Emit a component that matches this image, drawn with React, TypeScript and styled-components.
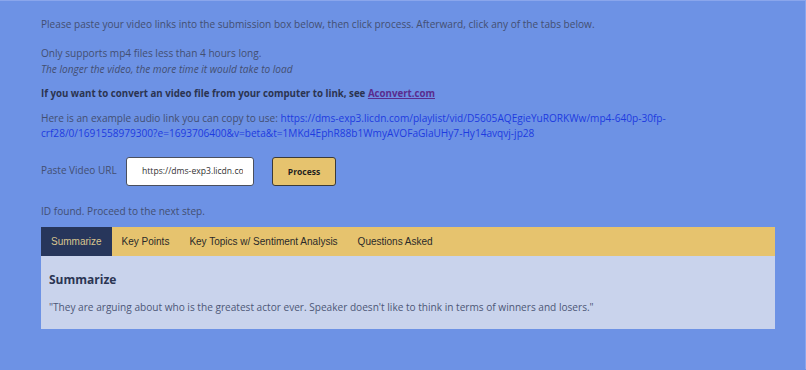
import { useState } from 'react';
import styled, { createGlobalStyle } from 'styled-components';

const GlobalStyle = createGlobalStyle`
  html, body {
    margin: 0;
    padding: 0;
    background-color: #6d92e5;
  }
  body {
    font-family: "Open Sans", "Liberation Sans", sans-serif;
    color: #434f72;
    border-top: 1px solid #8aa6ec;
    border-right: 1px solid #8aa6ec;
    min-height: 369px;
    box-sizing: border-box;
  }
`;

const tabs = ['Summarize', 'Key Points', 'Key Topics w/ Sentiment Analysis', 'Questions Asked'];

const exampleLink =
  'https://dms-exp3.licdn.com/playlist/vid/D5605AQEgieYuRORKWw/mp4-640p-30fp-crf28/0/1691558979300?e=1693706400&v=beta&t=1MKd4EphR88b1WmyAVOFaGlaUHy7-Hy14avqvj-jp28';

function App() {
  const [active, setActive] = useState(0);
  const [url, setUrl] = useState('https://dms-exp3.licdn.com/playlist/vid/D5605AQEgieYuRORKWw');

  return (
    <>
      <GlobalStyle />
      <Page>
        <Para>
          Please paste your video links into the submission box below, then click process. Afterward, click any of
          the tabs below.
        </Para>

        <Para gap={8.5}>
          Only supports mp4 files less than 4 hours long.
          <br />
          <em>The longer the video, the more time it would take to load</em>
        </Para>

        <BoldPara gap={9.5}>
          If you want to convert an video file from your computer to link, see{' '}
          <Visited href="#">Aconvert.com</Visited>
        </BoldPara>

        <Para>
          Here is an example audio link you can copy to use: <Link href="#">{exampleLink}</Link>
        </Para>

        <UrlRow>
          <Label>Paste Video URL</Label>
          <UrlInput value={url} onChange={(e) => setUrl(e.target.value)} />
          <ProcessButton>Process</ProcessButton>
        </UrlRow>

        <Status>ID found. Proceed to the next step.</Status>

        <TabBox>
          <TabBar>
            {tabs.map((t, i) => (
              <Tab key={t} active={i === active} onClick={() => setActive(i)}>
                {t}
              </Tab>
            ))}
          </TabBar>
          <Panel>
            <PanelTitle>{tabs[active]}</PanelTitle>
            <Quote>
              "They are arguing about who is the greatest actor ever. Speaker doesn't like to think in terms of winners
              and losers."
            </Quote>
          </Panel>
        </TabBox>
      </Page>
    </>
  );
}

export default App;

const Page = styled.div`
  width: 734px;
  padding: 16px 0 0 41px;
  font-size: 10.1px;
  line-height: 15.5px;
`;

const Para = styled.p<{ gap?: number }>`
  margin: 0 0 ${({ gap }) => gap ?? 13.5}px;
  em {
    font-style: italic;
  }
`;

const BoldPara = styled(Para)`
  font-weight: 700;
  font-size: 9.7px;
  color: #2b3450;
`;

const Visited = styled.a`
  color: #5a2c8e;
  text-decoration: underline;
`;

const Link = styled.a`
  color: #1d3be0;
  text-decoration: none;
`;

const UrlRow = styled.div`
  display: flex;
  align-items: center;
  margin-top: 15px;
`;

const Label = styled.span`
  flex: 0 0 85px;
  white-space: nowrap;
  font-size: 10px;
`;

const UrlInput = styled.input`
  box-sizing: border-box;
  flex-shrink: 0;
  width: 128px;
  height: 29px;
  padding: 0 10px 0 15px;
  border: 1px solid #4a4f5e;
  border-radius: 3px;
  background: #ffffff;
  font-family: "Open Sans", "Liberation Sans", sans-serif;
  font-size: 8.6px;
  color: #333;
  outline: none;
`;

const ProcessButton = styled.button`
  box-sizing: border-box;
  flex-shrink: 0;
  margin-left: 18px;
  width: 64px;
  height: 29px;
  border: 1px solid #3b3a38;
  border-radius: 3px;
  background: #e6c36e;
  font-family: "Open Sans", "Liberation Sans", sans-serif;
  font-weight: 700;
  font-size: 8.5px;
  color: #1f1f1f;
  cursor: pointer;
`;

const Status = styled.p`
  margin: 18px 0 8px;
`;

const TabBox = styled.div`
  width: 734px;
`;

const TabBar = styled.div`
  display: flex;
  height: 29px;
  background: #e6c36e;
`;

const Tab = styled.button<{ active: boolean }>`
  border: none;
  padding: 0 10px;
  font-family: "Liberation Sans", Arial, sans-serif;
  font-size: 10px;
  cursor: pointer;
  background: ${({ active }) => (active ? '#27365b' : 'transparent')};
  color: ${({ active }) => (active ? '#d8c58e' : '#2a2a2a')};
`;

const Panel = styled.div`
  background: #c9d3ec;
  padding: 16px 8px 13px;
`;

const PanelTitle = styled.h3`
  margin: 0 0 12px;
  font-size: 12px;
  line-height: 16px;
  font-weight: 700;
  color: #2b3553;
`;

const Quote = styled.p`
  margin: 0;
  font-size: 10.1px;
  color: #4d5777;
`;
